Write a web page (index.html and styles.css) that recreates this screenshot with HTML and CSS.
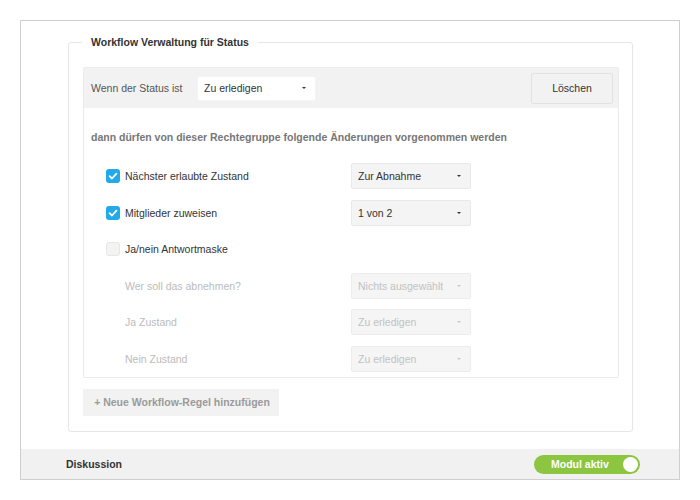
FILE: index.html
```html
<!DOCTYPE html>
<html lang="de">
<head>
<meta charset="utf-8">
<link rel="stylesheet" href="styles.css">
</head>
<body>
<div class="frame">
  <fieldset class="wf">
    <legend class="wf-legend">Workflow Verwaltung für Status</legend>
    <div class="panel">
      <div class="panel-head">
        <span class="head-label">Wenn der Status ist</span>
        <div class="sel sel-head"><span>Zu erledigen</span><i class="caret"></i></div>
        <button class="btn-del">Löschen</button>
      </div>
      <div class="panel-body">
        <div class="intro">dann dürfen von dieser Rechtegruppe folgende Änderungen vorgenommen werden</div>
        <div class="rows">
          <div class="row">
            <div class="lab"><span class="cb on"><svg viewBox="0 0 14 14" width="14" height="14"><path d="M3.6 7.2 L6 9.5 L10.4 4.6" fill="none" stroke="#fff" stroke-width="1.8" stroke-linecap="round" stroke-linejoin="round"/></svg></span>Nächster erlaubte Zustand</div>
            <div class="sel"><span>Zur Abnahme</span><i class="caret"></i></div>
          </div>
          <div class="row">
            <div class="lab"><span class="cb on"><svg viewBox="0 0 14 14" width="14" height="14"><path d="M3.6 7.2 L6 9.5 L10.4 4.6" fill="none" stroke="#fff" stroke-width="1.8" stroke-linecap="round" stroke-linejoin="round"/></svg></span>Mitglieder zuweisen</div>
            <div class="sel"><span>1 von 2</span><i class="caret"></i></div>
          </div>
          <div class="row">
            <div class="lab"><span class="cb off"></span>Ja/nein Antwortmaske</div>
          </div>
          <div class="row dis">
            <div class="lab sub">Wer soll das abnehmen?</div>
            <div class="sel"><span>Nichts ausgewählt</span><i class="caret"></i></div>
          </div>
          <div class="row dis">
            <div class="lab sub">Ja Zustand</div>
            <div class="sel"><span>Zu erledigen</span><i class="caret"></i></div>
          </div>
          <div class="row dis">
            <div class="lab sub">Nein Zustand</div>
            <div class="sel"><span>Zu erledigen</span><i class="caret"></i></div>
          </div>
        </div>
      </div>
    </div>
    <button class="btn-add">+ Neue Workflow-Regel hinzufügen</button>
  </fieldset>
  <div class="footer">
    <span class="foot-title">Diskussion</span>
    <div class="toggle"><span class="toggle-text">Modul aktiv</span><span class="knob"></span></div>
  </div>
</div>
</body>
</html>
```

FILE: styles.css
```css
* { box-sizing: border-box; }
html, body { margin: 0; padding: 0; background: #fff; }
body {
  font-family: "Liberation Sans", Arial, sans-serif;
  font-size: 10.5px;
  color: #333;
}
.frame {
  margin: 20px;
  width: 660px;
  height: 460px;
  border: 1px solid #cfcfcf;
  padding-top: 14px;
  display: flex;
  flex-direction: column;
}
.wf {
  margin: 0 46px 0 47px;
  border: 1px solid #e6e6e6;
  border-radius: 3px;
  padding: 18px 13px 15px 14px;
  min-width: 0;
}
.wf-legend {
  font-weight: bold;
  color: #333;
  padding: 0 9px;
  margin-left: -1px;
  line-height: 14px;
}
.panel {
  border: 1px solid #ebebeb;
  border-radius: 2px;
}
.panel-head {
  height: 40px;
  background: #f2f2f2;
  display: flex;
  align-items: center;
  padding: 0 5px 0 7px;
}
.head-label { color: #555; width: 106px; }
.sel {
  width: 120px;
  height: 26px;
  background: #f4f4f4;
  border: 1px solid #e8e8e8;
  border-radius: 2px;
  display: flex;
  align-items: center;
  justify-content: space-between;
  padding: 0 9px 0 6px;
  color: #333;
}
.sel-head {
  width: 119px;
  height: 25px;
  background: #fff;
  border-color: #f4f4f4;
}
.caret {
  width: 0; height: 0;
  border-left: 2px solid transparent;
  border-right: 2px solid transparent;
  border-top: 2.5px solid #333;
}
.btn-del {
  margin-left: auto;
  width: 82px;
  height: 31px;
  background: #f2f2f2;
  border: 1px solid #e2e2e2;
  border-radius: 2px;
  font: inherit;
  color: #333;
  padding: 0;
}
.panel-body {
  padding: 22px 0 5px 7px;
}
.intro {
  font-weight: bold;
  color: #777;
  line-height: 14px;
  margin-bottom: 19px;
}
.rows {
  display: flex;
  flex-direction: column;
  gap: 10.5px;
  padding-left: 15px;
}
.row {
  display: flex;
  align-items: center;
  height: 26px;
}
.lab {
  width: 245px;
  display: flex;
  align-items: center;
  color: #333;
}
.lab.sub { padding-left: 19px; color: #bbb; }
.cb {
  width: 14px;
  height: 14px;
  border-radius: 3px;
  margin-right: 5px;
  display: inline-block;
  flex: none;
}
.cb svg { display: block; }
.cb.on { background: #22a9ea; }
.cb.off { background: #f3f3f3; border: 1px solid #e6e6e6; }
.row .lab:has(.cb.off) { color: #333; }
.row.dis .sel { color: #c2c2c2; background: #f5f5f5; border-color: #ececec; }
.row.dis .caret { border-top-color: #c8c8c8; }
.btn-add {
  margin-top: 11px;
  height: 27px;
  width: 196px;
  background: #f2f2f2;
  border: 0;
  font: inherit;
  font-weight: bold;
  color: #9a9a9a;
  padding: 0 0 0 2px;
  display: block;
}
.footer {
  margin-top: auto;
  height: 30px;
  background: #f1f1f1;
  display: flex;
  align-items: center;
  padding: 0 39px 0 45px;
}
.foot-title { font-weight: bold; color: #333; }
.toggle {
  margin-left: auto;
  width: 106px;
  height: 19px;
  border-radius: 10px;
  background: #8cc540;
  display: flex;
  align-items: center;
  padding: 0 2px 0 17px;
}
.toggle-text { color: #fff; font-weight: bold; }
.knob {
  margin-left: auto;
  width: 15px;
  height: 15px;
  border-radius: 50%;
  background: #fff;
}
```
